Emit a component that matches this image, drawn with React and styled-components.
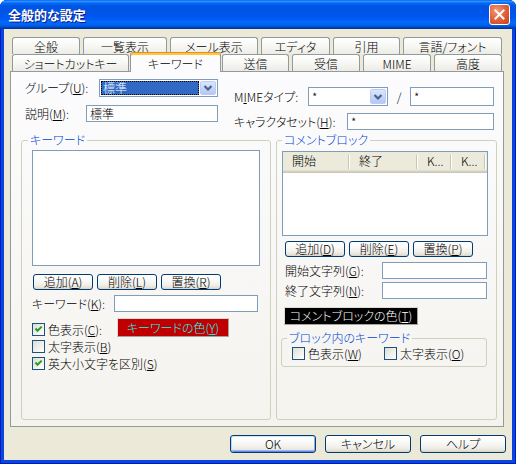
import React from "react";
import styled, { createGlobalStyle, css } from "styled-components";

const Global = createGlobalStyle`
  html, body { margin: 0; padding: 0; background: #ffffff; }
  body {
    font-family: "Noto Sans CJK JP", "Noto Sans", sans-serif;
    font-size: 12px;
    font-weight: 300;
    color: #000;
    font-feature-settings: "palt";
  }
  * { box-sizing: border-box; }
`;

const Window = styled.div`
  width: 516px;
  height: 464px;
  display: flex;
  flex-direction: column;
  background: #0846dc;
  border-radius: 7px 7px 0 0;
  box-shadow: inset 0 0 0 1px #0019c4;
  overflow: hidden;
`;

const TitleBar = styled.div`
  height: 29px;
  flex: none;
  display: flex;
  align-items: center;
  justify-content: space-between;
  padding: 0 6px 0 8px;
  background: linear-gradient(180deg, #0058ee 0%, #3593ff 4%, #288eff 6%, #127dff 8%, #036ffc 10%, #0262ee 14%, #0057e5 20%, #0054e3 24%, #0055eb 56%, #005bf5 66%, #026afe 76%, #0062ef 86%, #0052d6 92%, #0040ab 96%, #003092 100%);
`;

const TitleText = styled.span`
  color: #fff;
  font-weight: bold;
  font-size: 13px;
  line-height: 16px;
  text-shadow: 1px 1px 0 #0a1883;
`;

const CloseButton = styled.div`
  width: 21px;
  height: 21px;
  border: 1px solid #fff;
  border-radius: 3px;
  background: radial-gradient(circle at 35% 30%, #f29a7c 0%, #e2653f 45%, #c8411b 100%);
  display: flex;
  align-items: center;
  justify-content: center;
`;

const Client = styled.div`
  flex: 1;
  margin: 0 4px 4px;
  background: #ece9d8;
  display: flex;
  flex-direction: column;
  padding: 8px 6px 7px 6px;
`;

const TabStrip = styled.div`
  display: flex;
  flex-direction: column;
  padding-left: 2px;
`;

const TabRow = styled.div`
  display: flex;
  align-items: flex-end;
  gap: 3px;
  height: 17px;
`;

const Tab = styled.div`
  width: ${(p) => p.$w}px;
  height: 17px;
  flex: none;
  border: 1px solid #919b9c;
  border-bottom: none;
  border-radius: 3px 3px 0 0;
  background: linear-gradient(180deg, #ffffff 0%, #f8f8f5 45%, #ecebe6 100%);
  display: flex;
  align-items: center;
  justify-content: center;
  line-height: 14px;
  padding-top: 1px;
  white-space: nowrap;
  ${(p) =>
    p.$active &&
    css`
      width: ${p.$w + 4}px;
      height: 20px;
      margin: 0 -2px -1px;
      position: relative;
      z-index: 2;
      background: #fcfcfe;
      border-top: 1px solid #e68b2c;
      box-shadow: inset 0 2px 0 #ffc83c;
      padding-top: 2px;
    `}
`;

const Panel = styled.div`
  flex: 1;
  margin-right: 2px;
  border: 1px solid #919b9c;
  background: linear-gradient(180deg, #fcfcfe 0%, #f4f3ee 100%);
  padding: 7px 6px 0 10px;
  display: flex;
  flex-direction: column;
`;

const TopSection = styled.div`
  display: flex;
  gap: 16px;
  padding-left: 4px;
`;

const FieldCol = styled.div`
  display: flex;
  flex-direction: column;
  gap: ${(p) => p.$gap}px;
  width: ${(p) => p.$w}px;
  margin-top: ${(p) => p.$top || 0}px;
`;

const FieldRow = styled.div`
  display: flex;
  align-items: center;
  height: ${(p) => p.$h}px;
  padding-left: ${(p) => p.$pl || 0}px;
  margin-top: ${(p) => p.$mt || 0}px;
`;

const Label = styled.span`
  width: ${(p) => (p.$w ? `${p.$w}px` : "auto")};
  flex: none;
  line-height: 14px;
  white-space: nowrap;
`;

const U = styled.u`
  text-decoration: underline;
  text-underline-offset: 1px;
`;

const TextBox = styled.div`
  width: ${(p) => p.$w}px;
  height: 100%;
  flex: none;
  border: 1px solid #7f9db9;
  background: #fff;
  padding: 0 3px;
  display: flex;
  align-items: center;
  line-height: 14px;
`;

const Combo = styled.div`
  width: ${(p) => p.$w}px;
  height: 100%;
  flex: none;
  border: 1px solid #7f9db9;
  background: #fff;
  padding: 1px;
  display: flex;
  align-items: stretch;
`;

const ComboValue = styled.div`
  flex: 1;
  display: flex;
  align-items: center;
  padding-left: 2px;
  line-height: 14px;
  margin-right: 1px;
  ${(p) =>
    p.$selected &&
    css`
      background: #316ac5;
      color: #fff;
      outline: 1px dotted #000;
      outline-offset: -1px;
    `}
`;

const DropButton = styled.div`
  width: 16px;
  flex: none;
  border: 1px solid #b9cdf7;
  border-radius: 2px;
  background: linear-gradient(180deg, #dbe6fd 0%, #c6d6fb 50%, #b4c8f6 100%);
  display: flex;
  align-items: center;
  justify-content: center;
`;

const Slash = styled.span`
  width: 22px;
  text-align: center;
  flex: none;
`;

const GroupRow = styled.div`
  display: flex;
  gap: 5px;
  margin-top: 3px;
`;

const Group = styled.fieldset`
  width: ${(p) => p.$w}px;
  height: ${(p) => (p.$h ? `${p.$h}px` : "auto")};
  margin: ${(p) => p.$m || 0};
  padding: 0 0 ${(p) => p.$pb || 0}px 0;
  border: 1px solid #d0d0bf;
  border-radius: 3px;
  min-width: 0;
  display: flex;
  flex-direction: column;
`;

const Legend = styled.legend`
  color: #0046d5;
  padding: 0 2px;
  margin-left: ${(p) => p.$ml}px;
  line-height: 14px;
`;

const ListBox = styled.div`
  width: ${(p) => p.$w}px;
  height: ${(p) => p.$h}px;
  margin: ${(p) => p.$m};
  border: 1px solid #7f9db9;
  background: #fff;
  flex: none;
`;

const HeaderRow = styled.div`
  display: flex;
  height: 21px;
  background: #ebeadb;
  box-shadow: inset 0 -1px 0 #cbc7b8, inset 0 -2px 0 #d6d2c2, inset 0 -3px 0 #e2decd;
`;

const HeaderCell = styled.div`
  width: ${(p) => p.$w}px;
  flex: none;
  padding: 0 0 3px 9px;
  display: flex;
  align-items: center;
  line-height: 14px;
  background:
    linear-gradient(#c7c5b2, #c7c5b2) right 1px top 3px / 1px 14px no-repeat,
    linear-gradient(#ffffff, #ffffff) right 0 top 3px / 1px 14px no-repeat;
`;

const ButtonRow = styled.div`
  display: flex;
  gap: ${(p) => p.$gap}px;
  margin-top: ${(p) => p.$mt}px;
  padding-left: ${(p) => p.$pl || 0}px;
`;

const Button = styled.div`
  width: ${(p) => p.$w}px;
  height: ${(p) => p.$h}px;
  flex: none;
  border: 1px solid #003c74;
  border-radius: 3px;
  background: linear-gradient(180deg, #ffffff 0%, #fbfbf9 30%, #f1f0eb 70%, #e4e2d8 90%, #d6d0c5 100%);
  display: flex;
  align-items: center;
  justify-content: center;
  line-height: 14px;
  white-space: nowrap;
  ${(p) =>
    p.$default &&
    css`
      box-shadow: inset 0 1px 0 #cee7ff, inset 1px 0 0 #bcd4f6, inset -1px 0 0 #89ade4, inset 0 -1px 0 #6982ee, inset 0 -2px 0 #9db9eb;
    `}
`;

const ColorButton = styled.div`
  width: ${(p) => p.$w}px;
  height: ${(p) => p.$h}px;
  flex: none;
  background: ${(p) => p.$bg};
  color: ${(p) => p.$fg};
  border: 1px solid #dedcd2;
  border-right-color: #a5a49c;
  border-bottom-color: #a5a49c;
  display: flex;
  align-items: center;
  justify-content: center;
  line-height: 14px;
  white-space: nowrap;
  margin: ${(p) => p.$m || 0};
`;

const CheckItem = styled.label`
  display: flex;
  align-items: center;
  gap: 3px;
  width: ${(p) => (p.$w ? `${p.$w}px` : "auto")};
  flex: none;
  line-height: 14px;
  height: 13px;
  white-space: nowrap;
  margin-top: ${(p) => p.$mt || 0}px;
`;

const Box = styled.span`
  width: 13px;
  height: 13px;
  flex: none;
  border: 1px solid #1c5180;
  background: linear-gradient(135deg, #dcdcd7 0%, #eeede8 45%, #ffffff 100%);
  display: flex;
  align-items: center;
  justify-content: center;
`;

const CheckRow = styled.div`
  display: flex;
  align-items: flex-start;
  padding-left: ${(p) => p.$pl || 0}px;
  margin-top: ${(p) => p.$mt || 0}px;
  height: ${(p) => (p.$h ? `${p.$h}px` : "auto")};
`;

const Footer = styled.div`
  display: flex;
  justify-content: flex-end;
  gap: 9px;
  margin-top: 8px;
`;

function Check({ checked, children, w, mt }) {
  return (
    <CheckItem $w={w} $mt={mt}>
      <Box>
        {checked && (
          <svg width="11" height="11" viewBox="0 0 11 11">
            <path d="M2.5 4.5 L4.5 6.8 L8.7 2.6" fill="none" stroke="#21a121" strokeWidth="2" />
          </svg>
        )}
      </Box>
      <span>{children}</span>
    </CheckItem>
  );
}

function Arrow() {
  return (
    <svg width="10" height="8" viewBox="0 0 10 8">
      <path d="M1.5 2 L5 5.5 L8.5 2" fill="none" stroke="#4d6185" strokeWidth="2.2" />
    </svg>
  );
}

const backTabs = [
  ["全般", 68],
  ["一覧表示", 84],
  ["メール表示", 88],
  ["エディタ", 69],
  ["引用", 67],
  ["言語/フォント", 99],
];

const frontTabs = [
  ["ショートカットキー", 117],
  ["キーワード", 87, true],
  ["送信", 67],
  ["受信", 68],
  ["MIME", 68],
  ["高度", 68],
];

export default function App() {
  return (
    <>
      <Global />
      <Window>
        <TitleBar>
          <TitleText>全般的な設定</TitleText>
          <CloseButton>
            <svg width="11" height="11" viewBox="0 0 11 11">
              <path d="M1.5 1.5 L9.5 9.5 M9.5 1.5 L1.5 9.5" stroke="#fff" strokeWidth="2" strokeLinecap="square" />
            </svg>
          </CloseButton>
        </TitleBar>
        <Client>
          <TabStrip>
            <TabRow>
              {backTabs.map(([t, w]) => (
                <Tab key={t} $w={w}>{t}</Tab>
              ))}
            </TabRow>
            <TabRow>
              {frontTabs.map(([t, w, a]) => (
                <Tab key={t} $w={w} $active={a}>{t}</Tab>
              ))}
            </TabRow>
          </TabStrip>
          <Panel>
            <TopSection>
              <FieldCol $w={193} $gap={8}>
                <FieldRow $h={18}>
                  <Label $w={74}>グループ(<U>U</U>):</Label>
                  <Combo $w={119}>
                    <ComboValue $selected>標準</ComboValue>
                    <DropButton><Arrow /></DropButton>
                  </Combo>
                </FieldRow>
                <FieldRow $h={17}>
                  <Label $w={61}>説明(<U>M</U>):</Label>
                  <TextBox $w={132}>標準</TextBox>
                </FieldRow>
              </FieldCol>
              <FieldCol $w={260} $gap={7} $top={8}>
                <FieldRow $h={19}>
                  <Label $w={74}>M<U>I</U>MEタイプ:</Label>
                  <Combo $w={80}>
                    <ComboValue>*</ComboValue>
                    <DropButton><Arrow /></DropButton>
                  </Combo>
                  <Slash>/</Slash>
                  <TextBox $w={84}>*</TextBox>
                </FieldRow>
                <FieldRow $h={17}>
                  <Label $w={113}>キャラクタセット(<U>H</U>):</Label>
                  <TextBox $w={147}>*</TextBox>
                </FieldRow>
              </FieldCol>
            </TopSection>
            <GroupRow>
              <Group $w={250} $h={287}>
                <Legend $ml={6}>キーワード</Legend>
                <ListBox $w={228} $h={116} $m="3px 0 0 10px" />
                <ButtonRow $gap={4} $mt={8} $pl={11}>
                  <Button $w={60} $h={16}>追加(<U>A</U>)</Button>
                  <Button $w={60} $h={16}>削除(<U>L</U>)</Button>
                  <Button $w={60} $h={16}>置換(<U>R</U>)</Button>
                </ButtonRow>
                <FieldRow $h={17} $pl={10} $mt={5}>
                  <Label $w={82}>キーワード(<U>K</U>):</Label>
                  <TextBox $w={144} />
                </FieldRow>
                <CheckRow $pl={10} $mt={6} $h={19}>
                  <Check checked w={85} mt={5}>色表示(<U>C</U>):</Check>
                  <ColorButton $w={112} $h={19} $bg="#c00000" $fg="#00ffff">キーワードの色(<U>Y</U>)</ColorButton>
                </CheckRow>
                <CheckRow $pl={10} $mt={3}>
                  <Check>太字表示(<U>B</U>)</Check>
                </CheckRow>
                <CheckRow $pl={10} $mt={4}>
                  <Check checked>英大小文字を区別(<U>S</U>)</Check>
                </CheckRow>
              </Group>
              <Group $w={221} $h={287}>
                <Legend $ml={5}>コメントブロック</Legend>
                <ListBox $w={206} $h={85} $m="4px 0 0 5px">
                  <HeaderRow>
                    <HeaderCell $w={67}>開始</HeaderCell>
                    <HeaderCell $w={68}>終了</HeaderCell>
                    <HeaderCell $w={34}>K...</HeaderCell>
                    <HeaderCell $w={34}>K...</HeaderCell>
                  </HeaderRow>
                </ListBox>
                <ButtonRow $gap={4} $mt={5} $pl={8}>
                  <Button $w={60} $h={16}>追加(<U>D</U>)</Button>
                  <Button $w={60} $h={16}>削除(<U>E</U>)</Button>
                  <Button $w={60} $h={16}>置換(<U>P</U>)</Button>
                </ButtonRow>
                <FieldRow $h={17} $pl={8} $mt={5}>
                  <Label $w={97}>開始文字列(<U>G</U>):</Label>
                  <TextBox $w={105} />
                </FieldRow>
                <FieldRow $h={17} $pl={8} $mt={3}>
                  <Label $w={97}>終了文字列(<U>N</U>):</Label>
                  <TextBox $w={105} />
                </FieldRow>
                <ColorButton $w={134} $h={18} $bg="#000000" $fg="#ffffff" $m="8px 0 0 7px">
                  コメントブロックの色(<U>T</U>)
                </ColorButton>
                <Group $w={206} $m="6px 0 0 4px" $pb={6}>
                  <Legend $ml={5}>ブロック内のキーワード</Legend>
                  <CheckRow $pl={10} $mt={2}>
                    <Check w={92}>色表示(<U>W</U>)</Check>
                    <Check>太字表示(<U>O</U>)</Check>
                  </CheckRow>
                </Group>
              </Group>
            </GroupRow>
          </Panel>
          <Footer>
            <Button $w={86} $h={18} $default>OK</Button>
            <Button $w={86} $h={18}>キャンセル</Button>
            <Button $w={86} $h={18}>ヘルプ</Button>
          </Footer>
        </Client>
      </Window>
    </>
  );
}
